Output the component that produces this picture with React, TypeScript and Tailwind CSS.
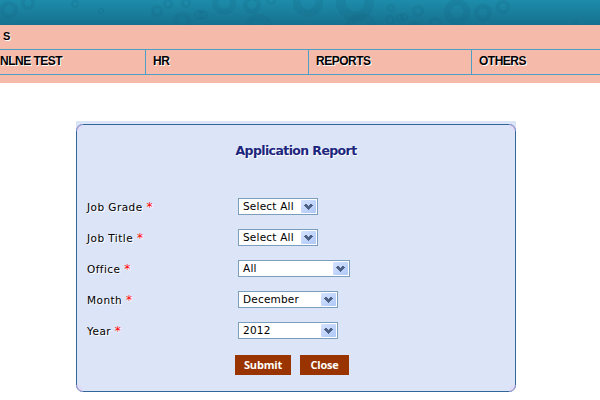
import React from 'react';

const rings = [
  [9, 10, 9], [28, 3, 7], [75, 4, 4], [101, 11, 3], [157, 11, 6], [168, 4, 5], [182, 21, 9], [186, 3, 5], [199, 15, 5],
  [203, 15, 5], [224, 3, 12], [252, 5, 9], [271, 0, 5], [259, 28, 14], [308, 2, 15], [355, 2, 19], [361, 30, 17], [391, 8, 4], [390, 20, 5],
  [400, 18, 4], [404, 17, 4], [418, 11, 6], [415, 28, 7], [435, 24, 7], [457, 12, 13], [483, 13, 9], [503, 7, 7], [575, 25, 4],
];

const menu = [
  { label: 'NLNE TEST', style: 'w-[146px] border-r pl-0' },
  { label: 'HR', style: 'w-[163px] border-r pl-[7px]' },
  { label: 'REPORTS', style: 'w-[163px] border-r pl-[7px]' },
  { label: 'OTHERS', style: 'flex-1 pl-[7px]' },
];

const fields = [
  { label: 'Job Grade', value: 'Select All', width: 'w-20' },
  { label: 'Job Title', value: 'Select All', width: 'w-20' },
  { label: 'Office', value: 'All', width: 'w-28' },
  { label: 'Month', value: 'December', width: 'w-[100px]' },
  { label: 'Year', value: '2012', width: 'w-[100px]' },
];

const corners = [
  '-top-px -left-px',
  '-top-px -right-px rotate-90',
  '-right-px -bottom-px rotate-180',
  '-bottom-px -left-px -rotate-90',
];

function Header() {
  return (
    <header className="h-[25px] bg-gradient-to-b from-[#1d8cab] to-[#16718e]">
      <svg width="600" height="25" className="block overflow-hidden" fill="none" stroke="#126680">
        {rings.map(([x, y, r], i) => (
          <circle key={i} cx={x} cy={y} r={r * 0.75} strokeWidth={r * 0.5} opacity="0.2" />
        ))}
      </svg>
    </header>
  );
}

function Select({ value, width }: { value: string; width: string }) {
  return (
    <div className={`flex h-[17px] items-center justify-between border border-[#7b9ebd] bg-white pr-px pl-1 ${width}`}>
      <span className="text-[10.5px] leading-[15px] tracking-[0.2px] whitespace-nowrap">{value}</span>
      <span className="flex h-[13px] w-[15px] shrink-0 items-center justify-center rounded-[1px] bg-gradient-to-br from-[#d5e2ff] to-[#aec8f7]">
        <svg width="9" height="6" viewBox="0 0 9 6" shapeRendering="crispEdges" fill="#4d6185">
          <path d="M1 0h2v1h1v1h1v-1h1v-1h2v1h1v1h-1v1h-1v1h-1v1h-1v1h-1v-1h-1v-1h-1v-1h-1v-1h-1v-1h1z" />
        </svg>
      </span>
    </div>
  );
}

export default function App() {
  return (
    <div className="h-[400px] w-[600px] overflow-hidden bg-white font-['DejaVu_Sans',Verdana,sans-serif] text-black">
      <Header />
      <nav className="h-[58px] bg-[#f5baaa] font-['Liberation_Sans',Arial,sans-serif] text-[12px] font-bold [text-shadow:1px_1px_0_#fff]">
        <div className="h-6 pl-[3px] text-[11px] leading-[23px]">S</div>
        <div className="flex h-[26px] border-y border-[#4ca0c4]">
          {menu.map((item) => (
            <div key={item.label} className={`border-[#4ca0c4] leading-[23px] tracking-[-0.5px] whitespace-nowrap ${item.style}`}>
              {item.label}
            </div>
          ))}
        </div>
      </nav>
      <main className="mt-[38px] ml-[76px] h-[271px] w-[440px] bg-gradient-to-b from-[#dce4f8] from-90% to-transparent to-90% pt-[3px]">
        <section className="relative h-[268px] rounded-[7px] border border-[#336699] bg-[#dce4f8] text-[10px]">
          {corners.map((place) => (
            <svg key={place} width="7" height="7" className={`absolute ${place}`}>
              <path d="M0.5 7A6.5 6.5 0 0 1 7 0.5V3L3 7Z" fill="#dedcf6" />
              <path d="M0.5 7A6.5 6.5 0 0 1 7 0.5" fill="none" stroke="#9999d3" strokeWidth="1.2" />
            </svg>
          ))}
          <h1 className="pt-[17px] text-center text-[12.5px] leading-[18px] font-bold tracking-[-0.6px] text-[#1d267d] [text-shadow:1px_1px_0_#fff]">
            Application Report
          </h1>
          <div className="mt-[38px] flex flex-col gap-[14px]">
            {fields.map((field) => (
              <div key={field.label} className="flex h-[17px] pl-[10px]">
                <div className="w-[151px] pt-px text-[10.5px] leading-[17px] tracking-[0.45px] [text-shadow:1px_1px_0_#fff]">
                  {field.label} <span className="text-[12px] leading-none text-[#ff0000]">*</span>
                </div>
                <Select value={field.value} width={field.width} />
              </div>
            ))}
          </div>
          <div className="mt-4 flex gap-[9px] pl-[158px] font-['Open_Sans','Noto_Sans',sans-serif] text-[11px] font-bold text-white">
            <button className="h-5 w-14 bg-[#993300] leading-5 tracking-[-0.2px]">Submit</button>
            <button className="h-5 w-[49px] bg-[#993300] leading-5 tracking-[-0.2px]">Close</button>
          </div>
        </section>
      </main>
    </div>
  );
}
